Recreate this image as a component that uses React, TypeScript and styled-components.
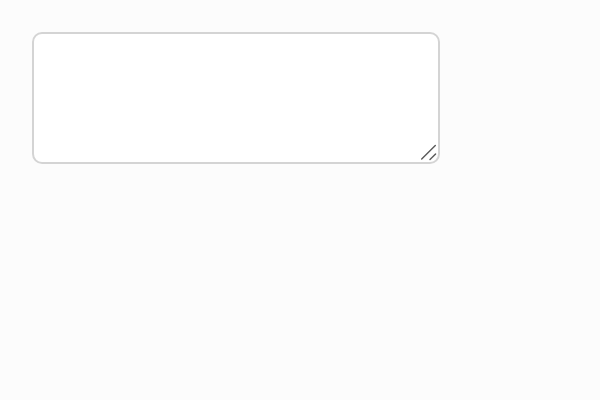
import React from "react";
import styled, { createGlobalStyle } from "styled-components";

const Global = createGlobalStyle`
  html, body { margin: 0; padding: 0; background: #fcfcfc; font-family: "Liberation Sans", Arial, sans-serif; }
`;

const Page = styled.div`
  padding: 32px;
`;

const Field = styled.div`
  position: relative;
  width: 408px;
  height: 132px;
`;

const Area = styled.textarea`
  display: block;
  box-sizing: border-box;
  width: 100%;
  height: 100%;
  border: 2px solid #d4d4d4;
  border-radius: 10px;
  background: #ffffff;
  outline: none;
  resize: none;
  padding: 8px 12px;
  font-family: "Liberation Sans", Arial, sans-serif;
  font-size: 14px;
`;

const Grip = styled.svg`
  position: absolute;
  right: 2px;
  bottom: 2px;
  width: 20px;
  height: 20px;
  pointer-events: none;
`;

export default function App() {
  return (
    <>
      <Global />
      <Page>
        <Field>
          <Area />
          <Grip viewBox="0 0 20 20">
            <line x1="3.7" y1="17" x2="17.3" y2="3.4" stroke="#5a5a5a" strokeWidth="1.4" strokeLinecap="round" />
            <line x1="12" y1="17.6" x2="17.6" y2="12" stroke="#5a5a5a" strokeWidth="1.4" strokeLinecap="round" />
          </Grip>
        </Field>
      </Page>
    </>
  );
}
